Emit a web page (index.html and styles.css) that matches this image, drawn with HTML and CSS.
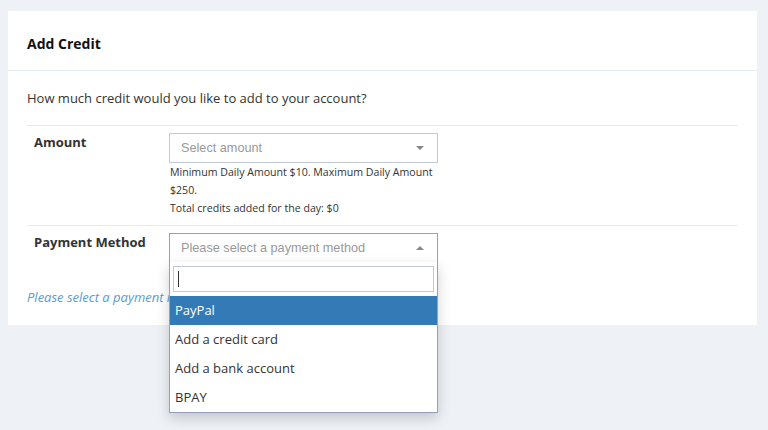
FILE: index.html
```html
<!DOCTYPE html>
<html>
<head>
<meta charset="utf-8">
<link rel="stylesheet" href="styles.css">
</head>
<body>
<div class="card">
  <div class="card-head">Add Credit</div>
  <div class="card-body">
    <p class="intro">How much credit would you like to add to your account?</p>
    <div class="table">
      <div class="row">
        <div class="label">Amount</div>
        <div class="field">
          <div class="select">
            <span class="placeholder">Select amount</span>
            <span class="arrow down"></span>
          </div>
          <div class="help">Minimum Daily Amount $10. Maximum Daily Amount $250.<br>Total credits added for the day: $0</div>
        </div>
      </div>
      <div class="row last">
        <div class="label">Payment Method</div>
        <div class="field">
          <div class="select-wrap">
            <div class="select open">
              <span class="placeholder">Please select a payment method</span>
              <span class="arrow up"></span>
            </div>
            <div class="dropdown">
              <div class="search"><span class="caret"></span></div>
              <ul class="options">
                <li class="opt active">PayPal</li>
                <li class="opt">Add a credit card</li>
                <li class="opt">Add a bank account</li>
                <li class="opt">BPAY</li>
              </ul>
            </div>
          </div>
        </div>
      </div>
    </div>
    <p class="note">Please select a payment method</p>
  </div>
</div>
</body>
</html>
```
FILE: styles.css
```css
html, body {
  margin: 0;
  padding: 0;
}
body {
  background: #eef1f5;
  padding: 11px 11px 0 8px;
  font-family: "Open Sans", "Liberation Sans", sans-serif;
  color: #333;
  height: 430px;
  box-sizing: border-box;
  overflow: hidden;
}
.card {
  background: #fff;
}
.card-head {
  height: 60px;
  box-sizing: border-box;
  padding: 24px 19px 0;
  line-height: 18px;
  font-size: 14px;
  font-weight: 700;
  color: #111;
  border-bottom: 1px solid #e7ecf1;
}
.card-body {
  padding: 18px 19px 19px;
}
.intro {
  margin: 0;
  font-size: 13px;
  line-height: 18px;
  color: #333;
}
.table {
  margin-top: 18px;
  border-top: 1px solid #e7ecf1;
}
.row {
  display: flex;
  padding: 7px 0 8px;
  border-bottom: 1px solid #e7ecf1;
}
.row.last {
  border-bottom: none;
  padding-bottom: 8px;
}
.label {
  width: 135px;
  padding-left: 7px;
  font-size: 13px;
  font-weight: 700;
  line-height: 18px;
  color: #333;
}
.field {
  width: 269px;
}
.select-wrap {
  position: relative;
}
.select {
  height: 30px;
  box-sizing: border-box;
  border: 1px solid #c2cad8;
  display: flex;
  align-items: center;
  padding: 0 11px;
  font-family: "Liberation Sans", Arial, sans-serif;
  font-size: 12.7px;
  color: #999;
}
.select.open {
  border-color: #93a1bb;
  border-bottom-color: #fff;
}
.placeholder {
  flex: 1;
}
.arrow {
  width: 0;
  height: 0;
  border-left: 4px solid transparent;
  border-right: 4px solid transparent;
  margin-right: 2px;
}
.arrow.down {
  border-top: 4px solid #888;
}
.arrow.up {
  border-bottom: 4px solid #888;
}
.help {
  font-size: 10.6px;
  line-height: 18px;
  color: #333;
  padding-left: 1px;
}
.dropdown {
  position: absolute;
  left: 0;
  right: 0;
  top: 29px;
  background: #fff;
  border: 1px solid #93a1bb;
  border-top: none;
  box-shadow: 0 5px 12px rgba(0, 0, 0, 0.18);
  padding-top: 4px;
  z-index: 2;
}
.search {
  margin: 0 3px 4px;
  height: 26px;
  box-sizing: border-box;
  border: 1px solid #c2cad8;
  position: relative;
}
.caret {
  position: absolute;
  left: 4px;
  top: 4px;
  width: 1px;
  height: 16px;
  background: #333;
}
.options {
  list-style: none;
  margin: 0;
  padding: 0;
}
.opt {
  height: 29px;
  line-height: 28px;
  padding-left: 5px;
  font-size: 13px;
  color: #333;
}
.opt.active {
  background: #337ab7;
  color: #fff;
}
.note {
  margin: 17px 0 0;
  font-size: 13px;
  line-height: 18px;
  font-style: italic;
  color: #5b9bd1;
}
```
